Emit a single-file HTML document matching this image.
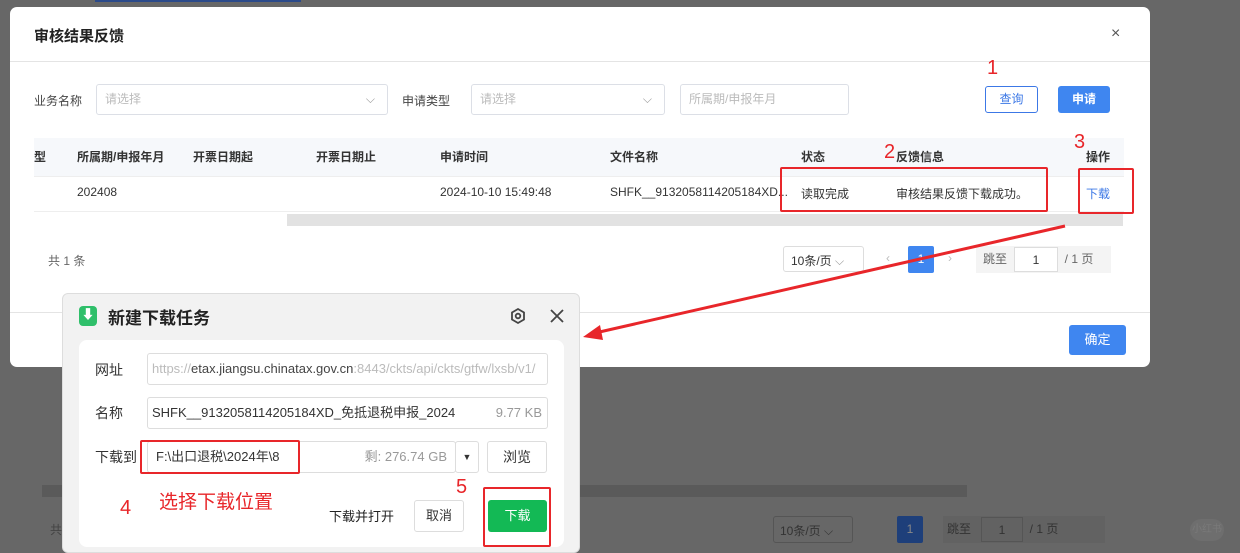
<!DOCTYPE html>
<html><head><meta charset="utf-8">
<style>
*{box-sizing:border-box;margin:0;padding:0}
body{width:1240px;height:548px;background:#676767;position:relative;overflow:hidden;font-family:"Liberation Sans","Noto Sans CJK SC",sans-serif;font-size:12px;color:#333}
.a{position:absolute}
.modal{left:10px;top:7px;width:1140px;height:360px;background:#fff;border-radius:7px}
.inp{border:1px solid #dcdfe6;border-radius:3px;background:#fff;color:#bbb;font-size:12px;padding-left:8px;line-height:29px;height:31px}
.th{font-weight:bold;color:#333;top:141px}
.red{border:2px solid #e8262a;border-radius:2px}
.rn{color:#e8262a;font-size:20px}
.dl{left:62px;top:293px;width:518px;height:260px;background:#f2f2f2;border:1px solid #ddd;border-radius:6px}
.fi{border:1px solid #ddd;background:#fff;border-radius:3px;height:32px;line-height:30px;font-size:13px}
</style></head><body>
<div class="a" style="left:95px;top:0;width:206px;height:2px;background:#2b4a8a"></div>
<div class="a" style="left:42px;top:485px;width:925px;height:12px;background:#5a5a5a"></div>
<div class="a" style="left:50px;top:521px;color:#444">共</div>
<div class="a" style="left:773px;top:516px;width:80px;height:27px;border:1px solid #555;border-radius:3px;color:#333;padding:5px 6px">10条/页 ⌵</div>
<div class="a" style="left:897px;top:516px;width:26px;height:27px;background:#1e3f7a;color:#888;text-align:center;line-height:27px;border-radius:2px">1</div>
<div class="a" style="left:943px;top:516px;width:162px;height:27px;background:#626262;color:#333;line-height:27px;padding-left:4px">跳至<span style="display:inline-block;width:42px;height:25px;border:1px solid #555;margin-left:10px;text-align:center;vertical-align:top;line-height:25px;margin-top:1px">1</span>&nbsp; / 1 页</div>
<div class="a" style="left:1190px;top:519px;width:34px;height:22px;border-radius:11px;background:#6e6e6e;color:#7a7a7a;font-size:10px;text-align:center;line-height:22px">小红书</div>

<div class="a modal">
 <div class="a" style="left:24px;top:18px;font-size:15px;font-weight:bold;color:#222">审核结果反馈</div>
 <div class="a" style="left:1101px;top:18px;font-size:16px;color:#555">×</div>
 <div class="a" style="left:0;top:54px;width:1140px;height:1px;background:#e4e4e4"></div>
 <div class="a" style="left:24px;top:85px;color:#444">业务名称</div>
 <div class="a inp" style="left:86px;top:77px;width:292px">请选择<span style="position:absolute;right:12px;color:#999">⌵</span></div>
 <div class="a" style="left:392px;top:85px;color:#444">申请类型</div>
 <div class="a inp" style="left:461px;top:77px;width:194px">请选择<span style="position:absolute;right:12px;color:#999">⌵</span></div>
 <div class="a inp" style="left:670px;top:77px;width:169px">所属期/申报年月</div>
 <div class="a" style="left:975px;top:79px;width:53px;height:27px;border:1px solid #3c78e6;border-radius:3px;color:#3c78e6;text-align:center;line-height:25px">查询</div>
 <div class="a" style="left:1048px;top:79px;width:52px;height:27px;background:#3f86f0;border-radius:3px;color:#fff;text-align:center;line-height:27px;font-weight:bold">申请</div>
 <div class="a rn" style="left:977px;top:50px">1</div>
 <div class="a" style="left:24px;top:131px;width:1090px;height:38px;background:#f6f8fb"></div>
 <div class="a" style="left:24px;top:169px;width:1090px;height:1px;background:#eee"></div>
 <div class="a" style="left:24px;top:204px;width:1090px;height:1px;background:#eee"></div>
 <div class="a th" style="left:24px">型</div>
 <div class="a th" style="left:67px">所属期/申报年月</div>
 <div class="a th" style="left:183px">开票日期起</div>
 <div class="a th" style="left:306px">开票日期止</div>
 <div class="a th" style="left:430px">申请时间</div>
 <div class="a th" style="left:600px">文件名称</div>
 <div class="a th" style="left:791px">状态</div>
 <div class="a th" style="left:886px">反馈信息</div>
 <div class="a th" style="left:1076px">操作</div>
 <div class="a rn" style="left:874px;top:134px">2</div>
 <div class="a rn" style="left:1064px;top:124px">3</div>
 <div class="a" style="left:67px;top:178px">202408</div>
 <div class="a" style="left:430px;top:178px">2024-10-10 15:49:48</div>
 <div class="a" style="left:600px;top:178px">SHFK__9132058114205184XD...</div>
 <div class="a" style="left:791px;top:178px">读取完成</div>
 <div class="a" style="left:886px;top:178px">审核结果反馈下载成功。</div>
 <div class="a" style="left:1076px;top:178px;color:#3c78e6">下载</div>
 <div class="a red" style="left:770px;top:160px;width:268px;height:45px"></div>
 <div class="a red" style="left:1068px;top:161px;width:56px;height:46px"></div>
 <div class="a" style="left:277px;top:207px;width:836px;height:12px;background:#e2e2e2"></div>
 <div class="a" style="left:38px;top:245px;color:#666">共 1 条</div>
 <div class="a" style="left:773px;top:239px;width:81px;height:26px;border:1px solid #ddd;border-radius:3px;padding:5px 7px;color:#333">10条/页 <span style="color:#999">⌵</span></div>
 <div class="a" style="left:876px;top:244px;color:#bbb">‹</div>
 <div class="a" style="left:898px;top:239px;width:26px;height:27px;background:#3f86f0;color:#fff;text-align:center;line-height:27px;border-radius:2px">1</div>
 <div class="a" style="left:938px;top:244px;color:#bbb">›</div>
 <div class="a" style="left:966px;top:239px;width:135px;height:27px;background:#f4f4f4;color:#666;line-height:27px;padding-left:7px">跳至<span style="display:inline-block;width:44px;height:25px;border:1px solid #ddd;background:#fff;margin-left:7px;text-align:center;vertical-align:top;line-height:25px;margin-top:1px;color:#333">1</span>&nbsp; / 1 页</div>
 <div class="a" style="left:0;top:305px;width:1140px;height:1px;background:#e4e4e4"></div>
 <div class="a" style="left:1059px;top:318px;width:57px;height:30px;background:#3f86f0;border-radius:3px;color:#fff;text-align:center;line-height:30px;font-size:13px">确定</div>
</div>

<div class="a dl">
 <div class="a" style="left:16px;top:12px;width:18px;height:20px;background:#2fbf6a;border-radius:4px;color:#fff;text-align:center;font-size:13px;line-height:18px">⬇</div>
 <div class="a" style="left:45px;top:10px;font-size:17px;font-weight:bold;color:#222">新建下载任务</div>
 <svg class="a" style="left:446px;top:13px" width="18" height="18" viewBox="0 0 18 18"><polygon points="9,2 15,5.5 15,12.5 9,16 3,12.5 3,5.5" fill="none" stroke="#444" stroke-width="1.8"/><circle cx="9" cy="9" r="2.3" fill="none" stroke="#444" stroke-width="1.8"/></svg>
 <svg class="a" style="left:486px;top:14px" width="16" height="16"><path d="M2 2L14 14M14 2L2 14" stroke="#444" stroke-width="1.8"/></svg>
 <div class="a" style="left:16px;top:46px;width:485px;height:207px;background:#fff;border-radius:8px"></div>
 <div class="a" style="left:32px;top:66px;font-size:14px">网址</div>
 <div class="a fi" style="left:84px;top:59px;width:401px;padding-left:4px;color:#bbb;white-space:nowrap;overflow:hidden">https://<span style="color:#444">etax.jiangsu.chinatax.gov.cn</span>:8443/ckts/api/ckts/gtfw/lxsb/v1/</div>
 <div class="a" style="left:32px;top:109px;font-size:14px">名称</div>
 <div class="a fi" style="left:84px;top:103px;width:401px;padding-left:4px;color:#333">SHFK__9132058114205184XD_免抵退税申报_2024<span style="position:absolute;right:5px;color:#999">9.77 KB</span></div>
 <div class="a" style="left:32px;top:153px;font-size:14px">下载到</div>
 <div class="a fi" style="left:84px;top:147px;width:309px;padding-left:8px;color:#333">F:\出口退税\2024年\8<span style="position:absolute;right:8px;color:#999">剩: 276.74 GB</span></div>
 <div class="a fi" style="left:392px;top:147px;width:24px;font-size:9px;text-align:center">▼</div>
 <div class="a fi" style="left:424px;top:147px;width:60px;text-align:center;font-size:14px">浏览</div>
 <div class="a red" style="left:77px;top:146px;width:160px;height:34px"></div>
 <div class="a rn" style="left:393px;top:182px">5</div>
 <div class="a rn" style="left:57px;top:203px">4</div>
 <div class="a" style="left:96px;top:193px;color:#e8262a;font-size:19px">选择下载位置</div>
 <div class="a" style="left:266px;top:212px;font-size:13px;color:#222">下载并打开</div>
 <div class="a fi" style="left:351px;top:206px;width:50px;text-align:center;font-size:13px">取消</div>
 <div class="a" style="left:425px;top:206px;width:59px;height:32px;background:#13b955;border-radius:3px;color:#fff;text-align:center;line-height:32px;font-size:13px">下载</div>
 <div class="a red" style="left:420px;top:193px;width:68px;height:60px"></div>
</div>
<svg class="a" style="left:0;top:0" width="1240" height="548"><path d="M1065 226 L595 333" stroke="#e8262a" stroke-width="3"/><polygon points="583,337 600,325 603,340" fill="#e8262a"/></svg>
</body></html>
